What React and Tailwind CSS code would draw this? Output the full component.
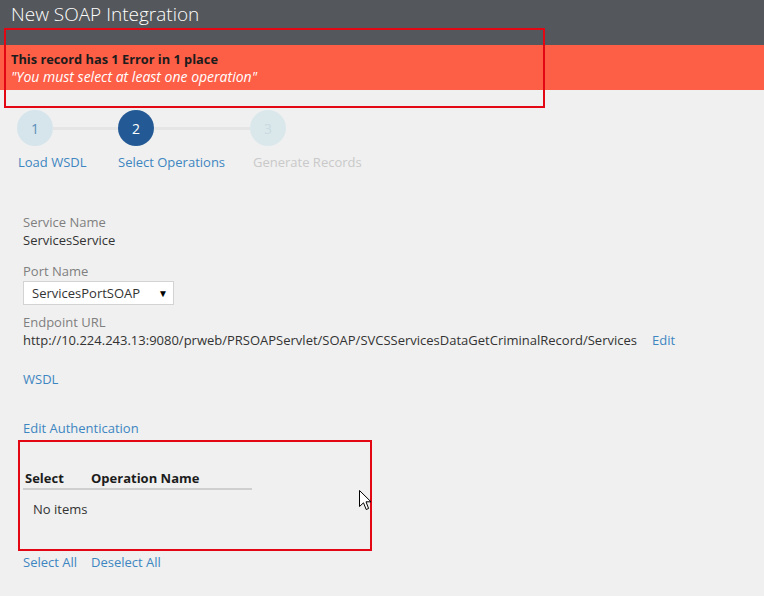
import React from "react";

const steps = [
  { n: "1", label: "Load WSDL", w: "w-[101px]", circle: "bg-[#d5e5eb] text-[#5b8fb9]", text: "text-[#3d86c1] pl-[1px]" },
  { n: "2", label: "Select Operations", w: "w-[132px]", circle: "bg-[#235a95] text-white", text: "text-[#3d86c1]" },
  { n: "3", label: "Generate Records", w: "w-[140px]", circle: "bg-[#dae8ec] text-[#cadbe1]", text: "text-[#c9c9c9] pl-[3px]", last: true },
];

function Step({ step }) {
  return (
    <div className={`flex flex-col ${step.w}`}>
      <div className="flex items-center">
        <div className={`w-[36px] h-[36px] rounded-full flex items-center justify-center text-[14px] shrink-0 ${step.circle}`}>
          {step.n}
        </div>
        {!step.last && <div className="flex-1 h-[3px] bg-[#e5e5e5]" />}
      </div>
      <div className={`mt-[7px] text-[13px] leading-[18px] whitespace-nowrap ${step.text}`}>{step.label}</div>
    </div>
  );
}

export default function App() {
  return (
    <div
      className="relative w-[764px] h-[596px] overflow-hidden bg-[#f0f0f0] text-[#333]"
      style={{ fontFamily: '"Open Sans", "Liberation Sans", sans-serif' }}
    >
      {/* header */}
      <div className="h-[45px] bg-[#54575b] pl-[11px] pt-[1px]">
        <h1 className="text-[19px] leading-[26px] text-white font-light">New SOAP Integration</h1>
      </div>

      {/* error banner */}
      <div className="h-[45px] bg-[#fd5e46] pl-[11px] pt-[5px]">
        <p className="text-[12.8px] leading-[18px] font-bold text-[#1c1c1c]">This record has 1 Error in 1 place</p>
        <p className="text-[14px] leading-[18px] italic text-white">"You must select at least one operation"</p>
      </div>

      {/* steps */}
      <div className="flex pl-[17px] mt-[20px]">
        {steps.map((s) => (
          <Step key={s.n} step={s} />
        ))}
      </div>

      <div className="pl-[23px] text-[13px] leading-[18px]">
        <div className="mt-[42px] text-[#7f7f7f]">Service Name</div>
        <div>ServicesService</div>

        <div className="mt-[13px] text-[#7f7f7f]">Port Name</div>
        <div className="mt-[1px] w-[151px] h-[24px] bg-white border border-[#d3d3d3] flex items-center justify-between pl-[8px] pr-[5px]">
          <span>ServicesPortSOAP</span>
          <span className="text-[10px] text-black">▼</span>
        </div>

        <div className="mt-[8px] text-[#7f7f7f]">Endpoint URL</div>
        <div className="flex gap-[15px]">
          <span>http://10.224.243.13:9080/prweb/PRSOAPServlet/SOAP/SVCSServicesDataGetCriminalRecord/Services</span>
          <span className="text-[#3d86c1]">Edit</span>
        </div>

        <div className="mt-[21px] text-[#3d86c1]">WSDL</div>

        <div className="mt-[31px] text-[#3d86c1]">Edit Authentication</div>

        <div className="mt-[32px] w-[229px]">
          <div className="flex font-bold text-[#1c1c1c] border-b-2 border-[#cfcfcf] pl-[2px] pb-[1px]">
            <span className="w-[66px]">Select</span>
            <span>Operation Name</span>
          </div>
          <div className="mt-[10px] pl-[10px]">No items</div>
        </div>

        <div className="mt-[35px] flex gap-[14px] text-[#3d86c1]">
          <span>Select All</span>
          <span>Deselect All</span>
        </div>
      </div>

      {/* annotation rectangles */}
      <div className="absolute left-[4px] top-[28px] w-[541px] h-[80px] border-2 border-[#e30613]" />
      <div className="absolute left-[18px] top-[440px] w-[354px] h-[111px] border-2 border-[#e30613]" />

      {/* mouse cursor */}
      <svg className="absolute left-[359px] top-[490px]" width="13" height="21" viewBox="0 0 13 21">
        <path
          d="M0.5 0.5 L0.5 16.5 L4.5 12.8 L7.2 19.5 L9.6 18.5 L7 11.8 L12 11.8 Z"
          fill="white"
          stroke="black"
          strokeWidth="1"
          strokeLinejoin="miter"
        />
      </svg>
    </div>
  );
}
